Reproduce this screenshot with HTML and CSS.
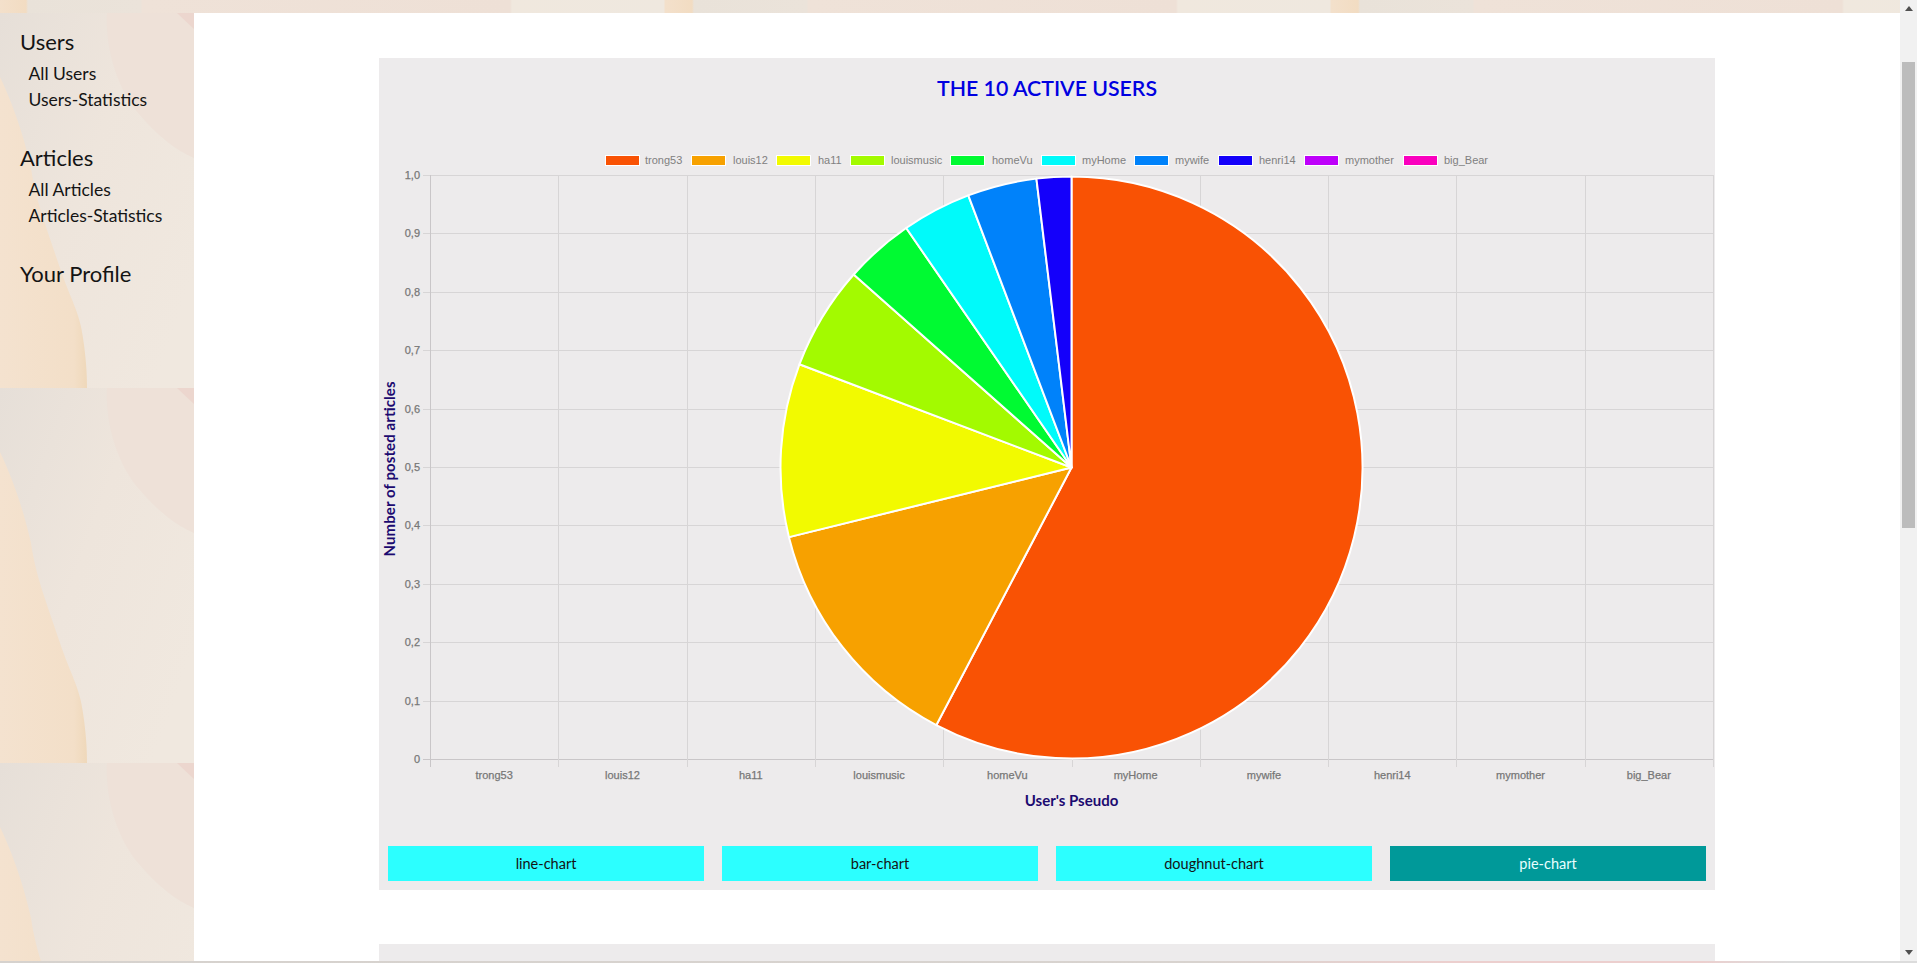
FILE: index.html
```html
<!DOCTYPE html>
<html>
<head>
    <title>Users Statistics</title>
    <meta name="viewport" content="width=device-width, initial-scale=1.0">
    <link rel="stylesheet" href="styles.css">
</head>
<body>
    <div class="window">
        <div class="page">
            <div class="topstrip"></div>
            <div class="layout">
                <aside class="sidebar">
                    <svg class="sidebar-bg" width="194" height="100%" aria-hidden="true">
                        <defs>
                            <linearGradient id="paper" x1="0" y1="0" x2="1" y2="0.7">
                                <stop offset="0" stop-color="#e6dfd8"/>
                                <stop offset="0.5" stop-color="#eee5dc"/>
                                <stop offset="1" stop-color="#f0e8df"/>
                            </linearGradient>
                            <linearGradient id="sand" x1="0" y1="0" x2="1" y2="0">
                                <stop offset="0" stop-color="#f4e2cf"/>
                                <stop offset="0.85" stop-color="#f3dfc8"/>
                                <stop offset="1" stop-color="#efd8ba"/>
                            </linearGradient>
                            <pattern id="tile" width="194" height="375" patternUnits="userSpaceOnUse">
                                <rect width="194" height="375" fill="url(#paper)"/>
                                <path d="M107 0 C105 40 120 80 140 102 C155 120 175 137 194 145 L194 0 Z" fill="#eee1d8"/>
                                <path d="M177 0 L194 0 L194 16 Z" fill="#ecd6ce"/>
                                <path d="M0 64 C10 85 22 115 31 155 C36 190 47 215 60 255 C70 285 80 300 83 325 C86 345 87 360 87 375 L0 375 Z" fill="url(#sand)"/>
                            </pattern>
                        </defs>
                        <rect width="194" height="100%" fill="url(#tile)"/>
                    </svg>
                    <nav class="nav">
                        <div class="nav-group">
                            <h3>Users</h3>
                            <a href="#">All Users</a>
                            <a href="#">Users-Statistics</a>
                        </div>
                        <div class="nav-group">
                            <h3>Articles</h3>
                            <a href="#">All Articles</a>
                            <a href="#">Articles-Statistics</a>
                        </div>
                        <div class="nav-group">
                            <h3>Your Profile</h3>
                        </div>
                    </nav>
                </aside>
                <main class="main">
                    <section class="panel">
                        <h2 class="panel-title">THE 10 ACTIVE USERS</h2>
                        <svg id="chart" class="chart" width="1336" height="700" viewBox="379 130 1336 700"></svg>
                        <div class="chart-buttons">
                            <button>line-chart</button>
                            <button>bar-chart</button>
                            <button>doughnut-chart</button>
                            <button class="active">pie-chart</button>
                        </div>
                    </section>
                    <section class="panel panel-next"></section>
                </main>
            </div>
        </div>
        <div class="scrollbar">
            <span class="arrow-up"></span>
            <span class="thumb"></span>
            <span class="arrow-down"></span>
        </div>
    </div>
    <div class="bottomstrip"></div>
    <script src="chart.js"></script>
</body>
</html>
```

FILE: styles.css
```css
html, body {
    margin: 0;
    height: 963px;
    overflow: hidden;
}

body {
    font-family: Lato, sans-serif;
    color: #141414;
    background-color: #fff;
}

.window {
    display: flex;
    height: 961px;
}

.page {
    flex: 1;
    min-width: 0;
    display: flex;
    flex-direction: column;
}

.topstrip {
    height: 13px;
    flex: none;
    background-image: linear-gradient(90deg, #f3e0cb 0, #f2dcc2 26px, #e9e2d9 28px, #ebe3da 141px, #efe2d8 142px, #eee0d6 510px, #f0e8de 512px, #efe8df 664px, #f3e0cb 665px);
    background-size: 666px 13px;
}

.layout {
    flex: 1;
    min-height: 0;
    display: flex;
}

/* sidebar */
.sidebar {
    position: relative;
    width: 194px;
    flex: none;
}

.sidebar-bg {
    position: absolute;
    top: 0;
    left: 0;
}

.nav {
    position: relative;
    padding: 14px 0 0 20px;
}

.nav-group {
    margin-bottom: 30px;
}

.nav-group h3 {
    margin: 0 0 4px;
    font-size: 22px;
    font-weight: normal;
    line-height: 30px;
}

.nav-group a {
    display: block;
    margin-left: 8.5px;
    font-size: 17.5px;
    line-height: 26px;
    color: #141414;
    text-decoration: none;
}

/* main column */
.main {
    flex: 1;
    min-width: 0;
    overflow: hidden;
    padding: 45px 0 0 185px;
    background-color: #fff;
}

.panel {
    width: 1336px;
    background-color: #edebec;
}

.panel-title {
    margin: 0;
    height: 72px;
    padding-top: 17px;
    box-sizing: border-box;
    font-size: 21.3px;
    font-weight: 600;
    line-height: 27px;
    text-align: center;
    color: #0000e1;
}

.chart {
    display: block;
}

.chart-buttons {
    display: flex;
    gap: 18px;
    padding: 16px 9px 9px;
}

.chart-buttons button {
    flex: 1;
    height: 35px;
    padding: 0;
    border: 0;
    font-family: Lato, sans-serif;
    font-size: 14.5px;
    color: #141414;
    background-color: #2cffff;
}

.chart-buttons button.active {
    color: #e8ffff;
    background-color: #009999;
}

.panel-next {
    height: 60px;
    margin-top: 54px;
}

/* chart text and lines, drawn by chart.js */
.grid-line {
    stroke: #d7d5d6;
    stroke-width: 1;
    shape-rendering: crispEdges;
}

.axis-line {
    stroke: #c9c6c8;
    stroke-width: 1;
    shape-rendering: crispEdges;
}

.tick-label {
    font-family: "Liberation Sans", sans-serif;
    font-size: 11px;
    fill: #777;
    stroke: #777;
    stroke-width: 0.25px;
}

.legend-label {
    font-family: "Liberation Sans", sans-serif;
    font-size: 11px;
    fill: #808080;
}

.axis-title {
    font-family: Lato, sans-serif;
    font-size: 15px;
    font-weight: bold;
    fill: #1c0a70;
}

/* scrollbar */
.scrollbar {
    position: relative;
    width: 17px;
    flex: none;
    background-color: #f1f1f1;
}

.thumb {
    position: absolute;
    top: 62px;
    left: 2px;
    width: 13px;
    height: 466px;
    background-color: #bcbcbc;
}

.arrow-up, .arrow-down {
    position: absolute;
    left: 5px;
    width: 0;
    height: 0;
    border-left: 4px solid transparent;
    border-right: 4px solid transparent;
}

.arrow-up {
    top: 6px;
    border-bottom: 5px solid #505050;
}

.arrow-down {
    bottom: 6px;
    border-top: 5px solid #505050;
}

.bottomstrip {
    height: 2px;
    background-image: linear-gradient(90deg, #d6d2ce 0, #d8d3cf 1200px, #eccfce 1450px, #eccfce 1700px, #dcdcdc 1790px);
}
```

FILE: chart.js
```js
var NS = "http://www.w3.org/2000/svg";
var chart = document.getElementById("chart");

var users = [
    { name: "trong53", posts: 30, color: "#f95204", box: 605, text: 645 },
    { name: "louis12", posts: 7, color: "#f7a100", box: 691, text: 733 },
    { name: "ha11", posts: 5, color: "#f2fa00", box: 776, text: 818 },
    { name: "louismusic", posts: 3, color: "#a3fa00", box: 850, text: 891 },
    { name: "homeVu", posts: 2, color: "#00fa32", box: 950, text: 992 },
    { name: "myHome", posts: 2, color: "#00fafa", box: 1041, text: 1082 },
    { name: "mywife", posts: 2, color: "#0082fa", box: 1134, text: 1175 },
    { name: "henri14", posts: 1, color: "#1400fa", box: 1218, text: 1259 },
    { name: "mymother", posts: 0, color: "#be00fa", box: 1304, text: 1345 },
    { name: "big_Bear", posts: 0, color: "#fa00be", box: 1403, text: 1444 }
];

// plot area, in page pixels
var left = 430, right = 1713, top_ = 175, bottom = 759;

function add(tag, attrs, text) {
    var el = document.createElementNS(NS, tag);
    for (var key in attrs) {
        el.setAttribute(key, attrs[key]);
    }
    if (text !== undefined) {
        el.textContent = text;
    }
    chart.appendChild(el);
    return el;
}

function line(x1, y1, x2, y2, cls) {
    add("line", { x1: x1, y1: y1, x2: x2, y2: y2, "class": cls });
}

/* horizontal grid and the y labels */
for (var i = 0; i <= 10; i++) {
    var y = Math.round(bottom - (bottom - top_) * i / 10) + 0.5;
    line(423, y, right + 1, y, i == 0 ? "axis-line" : "grid-line");
    var label = i == 0 ? "0" : i == 10 ? "1,0" : "0," + i;
    add("text", { x: 420, y: y + 3.5, "text-anchor": "end", "class": "tick-label" }, label);
}

/* vertical grid and the x labels */
var step = (right - left) / 10;
for (var j = 0; j <= 10; j++) {
    var x = Math.round(left + step * j) + 0.5;
    line(x, top_, x, 767, j == 0 ? "axis-line" : "grid-line");
    if (j < 10) {
        add("text", { x: left + step * (j + 0.5), y: 779, "text-anchor": "middle", "class": "tick-label" }, users[j].name);
    }
}

/* legend */
users.forEach(function (user) {
    add("rect", { x: user.box + 0.5, y: 155.5, width: 34, height: 10, fill: user.color, stroke: "#fff", "stroke-width": 1 });
    add("text", { x: user.text, y: 163.5, "class": "legend-label" }, user.name);
});

/* pie, clockwise from the top */
var cx = 1071.5, cy = 467.5, radius = 291;
var total = users.reduce(function (sum, user) { return sum + user.posts; }, 0);
var angle = -Math.PI / 2;
users.forEach(function (user) {
    if (user.posts == 0) {
        return;
    }
    var end = angle + user.posts / total * Math.PI * 2;
    var big = end - angle > Math.PI ? 1 : 0;
    var d = "M" + cx + " " + cy +
        " L" + (cx + radius * Math.cos(angle)) + " " + (cy + radius * Math.sin(angle)) +
        " A" + radius + " " + radius + " 0 " + big + " 1 " + (cx + radius * Math.cos(end)) + " " + (cy + radius * Math.sin(end)) + " Z";
    add("path", { d: d, fill: user.color, stroke: "#fff", "stroke-width": 2, "stroke-linejoin": "round" });
    angle = end;
});

/* axis titles */
add("text", { x: 1071.5, y: 806, "text-anchor": "middle", "class": "axis-title" }, "User's Pseudo");
add("text", { x: 395, y: 469, "text-anchor": "middle", transform: "rotate(-90 395 469)", textLength: 175, "class": "axis-title" }, "Number of posted articles");
```
